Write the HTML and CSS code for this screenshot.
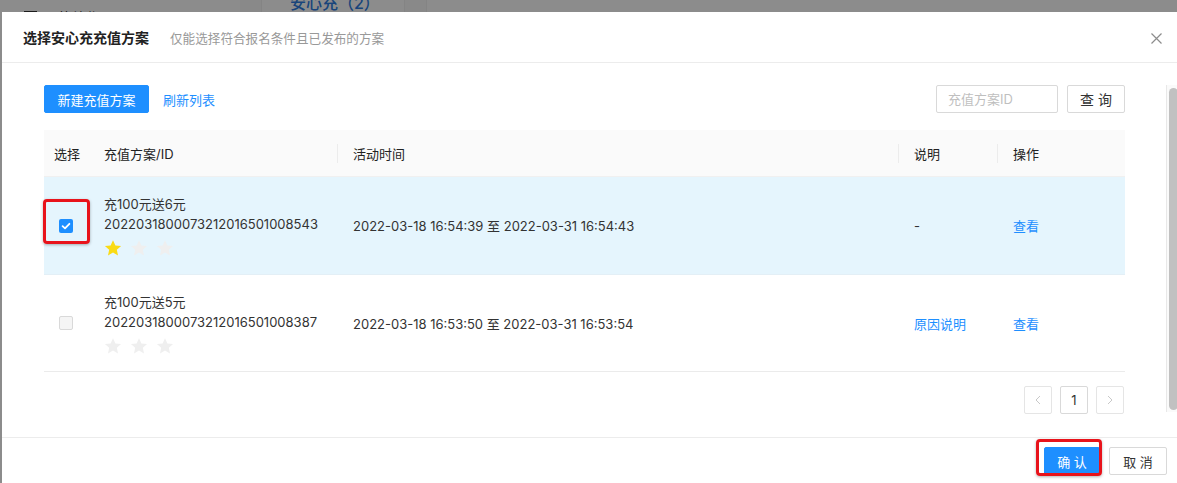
FILE: index.html
```html
<!DOCTYPE html>
<html lang="zh-CN">
<head>
    <meta charset="UTF-8">
    <title>选择安心充充值方案</title>
    <link rel="stylesheet" href="styles.css">
</head>
<body>
    <div class="page">
        <div class="side-nav"><span class="nav-icon"></span>运营总览</div>
        <div class="page-tabs">
            <div class="page-tab"></div>
            <div class="page-tab active">安心充（2）</div>
            <div class="page-tab"></div>
        </div>
    </div>

    <div class="mask"></div>

    <div class="modal">
        <div class="modal-header">
            <div class="modal-title">选择安心充充值方案<span class="modal-sub">仅能选择符合报名条件且已发布的方案</span></div>
            <span class="modal-close">
                <svg width="11" height="11" viewBox="0 0 11 11"><path d="M0.5 0.5 L10.5 10.5 M10.5 0.5 L0.5 10.5" stroke="#8c8c8c" stroke-width="1.2" fill="none"/></svg>
            </span>
        </div>

        <div class="modal-body">
            <div class="toolbar">
                <div class="toolbar-left">
                    <button class="btn btn-primary btn-new">新建充值方案</button>
                    <a class="link">刷新列表</a>
                </div>
                <div class="toolbar-right">
                    <input class="search-input" placeholder="充值方案ID">
                    <button class="btn btn-search">查 询</button>
                </div>
            </div>

            <div class="plan-table">
                <div class="row row-head">
                    <div class="cell cell-check">选择</div>
                    <div class="cell">充值方案/ID</div>
                    <div class="cell sep">活动时间</div>
                    <div class="cell sep">说明</div>
                    <div class="cell sep">操作</div>
                </div>

                <div class="row row-selected">
                    <div class="cell cell-check">
                        <span class="check-wrap">
                            <span class="checkbox checked">
                                <svg width="14" height="14" viewBox="0 0 14 14"><path d="M3.6 7.2 L6 9.4 L10.4 4.8" stroke="#fff" stroke-width="1.8" fill="none" stroke-linecap="round" stroke-linejoin="round"/></svg>
                            </span>
                            <span class="mark mark-check"></span>
                        </span>
                    </div>
                    <div class="cell plan">
                        <div>充100元送6元</div>
                        <div>2022031800073212016501008543</div>
                        <div class="stars">
                            <svg class="star on" viewBox="0 0 24 24"><path d="M12 1.5l3.2 7 7.6.8-5.7 5.1 1.6 7.5L12 18l-6.7 3.9 1.6-7.5-5.7-5.1 7.6-.8z"/></svg>
                            <svg class="star" viewBox="0 0 24 24"><path d="M12 1.5l3.2 7 7.6.8-5.7 5.1 1.6 7.5L12 18l-6.7 3.9 1.6-7.5-5.7-5.1 7.6-.8z"/></svg>
                            <svg class="star" viewBox="0 0 24 24"><path d="M12 1.5l3.2 7 7.6.8-5.7 5.1 1.6 7.5L12 18l-6.7 3.9 1.6-7.5-5.7-5.1 7.6-.8z"/></svg>
                        </div>
                    </div>
                    <div class="cell">2022-03-18 16:54:39 至 2022-03-31 16:54:43</div>
                    <div class="cell">-</div>
                    <div class="cell"><a class="link">查看</a></div>
                </div>

                <div class="row">
                    <div class="cell cell-check"><span class="checkbox disabled"></span></div>
                    <div class="cell plan">
                        <div>充100元送5元</div>
                        <div>2022031800073212016501008387</div>
                        <div class="stars">
                            <svg class="star" viewBox="0 0 24 24"><path d="M12 1.5l3.2 7 7.6.8-5.7 5.1 1.6 7.5L12 18l-6.7 3.9 1.6-7.5-5.7-5.1 7.6-.8z"/></svg>
                            <svg class="star" viewBox="0 0 24 24"><path d="M12 1.5l3.2 7 7.6.8-5.7 5.1 1.6 7.5L12 18l-6.7 3.9 1.6-7.5-5.7-5.1 7.6-.8z"/></svg>
                            <svg class="star" viewBox="0 0 24 24"><path d="M12 1.5l3.2 7 7.6.8-5.7 5.1 1.6 7.5L12 18l-6.7 3.9 1.6-7.5-5.7-5.1 7.6-.8z"/></svg>
                        </div>
                    </div>
                    <div class="cell">2022-03-18 16:53:50 至 2022-03-31 16:53:54</div>
                    <div class="cell"><a class="link">原因说明</a></div>
                    <div class="cell"><a class="link">查看</a></div>
                </div>
            </div>

            <div class="pager">
                <span class="page-item disabled">
                    <svg width="6" height="10" viewBox="0 0 6 10"><path d="M5 1 L1 5 L5 9" stroke="#c8c8c8" fill="none"/></svg>
                </span>
                <span class="page-item">1</span>
                <span class="page-item disabled">
                    <svg width="6" height="10" viewBox="0 0 6 10"><path d="M1 1 L5 5 L1 9" stroke="#c8c8c8" fill="none"/></svg>
                </span>
            </div>

            <div class="scrollbar"><div class="scroll-thumb"></div></div>
        </div>

        <div class="modal-footer">
            <span class="ok-wrap">
                <button class="btn btn-primary btn-ok">确 认</button>
                <span class="mark mark-ok"></span>
            </span>
            <button class="btn btn-cancel">取 消</button>
        </div>
    </div>
</body>
</html>
```

FILE: styles.css
```css
* {
    box-sizing: border-box;
    margin: 0;
    padding: 0;
}

body {
    font-family: Inter, "Noto Sans CJK SC", sans-serif;
    font-size: 13px;
    color: #333;
    background: #fff;
    overflow: hidden;
    height: 483px;
}

/* page behind the mask */
.page {
    display: flex;
    height: 60px;
}

.side-nav {
    width: 240px;
    padding: 7px 0 0 24px;
    font-size: 14px;
    color: #333;
    display: flex;
    gap: 6px;
}

.nav-icon {
    width: 13px;
    height: 13px;
    border: 1.5px solid #333;
    margin-top: 4px;
}

.page-tabs {
    display: flex;
    margin-top: -10px;
}

.page-tab {
    width: 22px;
    height: 40px;
    border-right: 1px solid #f0f0f0;
    background: #fafafa;
}

.page-tab.active {
    width: 143px;
    padding-left: 28px;
    font-size: 16px;
    font-weight: 500;
    line-height: 26px;
    color: #2f7de1;
    background: #fff;
}

.mask {
    position: fixed;
    inset: 0;
    background: rgba(0, 0, 0, 0.45);
}

/* modal */
.modal {
    position: fixed;
    top: 12px;
    left: 2px;
    width: 1190px;
    background: #fff;
}

.modal-header {
    height: 51px;
    padding: 0 30px 0 21px;
    border-bottom: 1px solid #ececec;
    display: flex;
    align-items: center;
    justify-content: space-between;
}

.modal-title {
    font-size: 14px;
    font-weight: 600;
    color: #222;
}

.modal-sub {
    margin-left: 21px;
    font-size: 12.6px;
    font-weight: normal;
    color: #999;
}

.modal-close {
    display: flex;
    margin-top: 2px;
}

.modal-body {
    position: relative;
    padding: 22px 67px 23px 42px;
}

.toolbar {
    display: flex;
    justify-content: space-between;
    align-items: center;
}

.toolbar-left,
.toolbar-right {
    display: flex;
    align-items: center;
}

.btn {
    height: 28px;
    border: 1px solid #d9d9d9;
    border-radius: 2px;
    background: #fff;
    color: #333;
    font-family: inherit;
    font-size: 13px;
    cursor: pointer;
}

.btn-primary {
    background: #1e8fff;
    border-color: #1e8fff;
    color: #fff;
}

.btn-new {
    width: 105px;
}

.link {
    color: #1e8fff;
    cursor: pointer;
}

.toolbar-left .link {
    margin-left: 14px;
}

.search-input {
    width: 122px;
    height: 28px;
    padding: 0 11px;
    border: 1px solid #d9d9d9;
    border-radius: 2px;
    font-family: inherit;
    font-size: 13px;
    outline: none;
}

.search-input::placeholder {
    color: #bfbfbf;
}

.btn-search {
    width: 58px;
    margin-left: 9px;
    font-size: 14px;
}

/* table */
.plan-table {
    margin-top: 17px;
}

.row {
    display: grid;
    grid-template-columns: 44px 249px 561px 99px 1fr;
    height: 98px;
    border-bottom: 1px solid #ebebeb;
}

.row-head {
    height: 47px;
    background: #fafafa;
    border-bottom: 1px solid #f0f0f0;
    color: #222;
}

.row-selected {
    height: 98px;
    background: #e5f5fd;
    border-bottom: 1px solid #e3eff6;
}

.row:last-child {
    height: 97px;
}

.cell {
    position: relative;
    display: flex;
    align-items: center;
    padding-left: 16px;
}

.cell-check {
    padding-left: 10px;
}

.row:not(.row-head) .cell-check {
    padding-left: 0;
    justify-content: center;
}

.sep::before {
    content: "";
    position: absolute;
    left: 0;
    top: 14px;
    height: 19px;
    border-left: 1px solid #ececec;
}

.plan {
    flex-direction: column;
    align-items: flex-start;
    justify-content: center;
    line-height: 20px;
}

.stars {
    display: flex;
    gap: 8px;
    margin-top: 5px;
}

.star {
    width: 18px;
    height: 18px;
    fill: #efefef;
}

.star.on {
    fill: #fadb14;
}

.checkbox {
    display: block;
    width: 14px;
    height: 14px;
    border-radius: 2px;
    border: 1px solid #d9d9d9;
    background: #f5f5f5;
}

.checkbox.checked {
    border: none;
    background: #1e8fff;
}

.checkbox svg {
    display: block;
}

.check-wrap,
.ok-wrap {
    position: relative;
    display: inline-block;
}

/* red annotation boxes */
.mark {
    position: absolute;
    border: 3px solid #e8131b;
    border-radius: 4px;
    box-shadow: 0 1px 3px rgba(0, 0, 0, 0.3);
}

.mark-check {
    left: -16px;
    top: -20px;
    width: 47px;
    height: 45px;
}

.mark-ok {
    left: -8px;
    top: -8px;
    width: 66px;
    height: 37px;
}

/* pager */
.pager {
    display: flex;
    justify-content: flex-end;
    gap: 8px;
    margin-top: 14px;
    padding-right: 1px;
}

.page-item {
    width: 28px;
    height: 28px;
    border: 1px solid #d9d9d9;
    border-radius: 2px;
    display: flex;
    align-items: center;
    justify-content: center;
    color: #333;
}

.page-item.disabled {
    border-color: #e5e5e5;
}

.scrollbar {
    position: absolute;
    left: 1164px;
    top: 22px;
    width: 16px;
    height: 327px;
    background: #fafafa;
    border-left: 1px solid #e8e8e8;
}

.scroll-thumb {
    margin: 3px 0 0 2px;
    width: 9px;
    height: 322px;
    border-radius: 5px;
    background: #c1c1c1;
}

/* footer */
.modal-footer {
    border-top: 1px solid #ececec;
    padding: 9px 25px 10px 0;
    display: flex;
    justify-content: flex-end;
    gap: 9px;
}

.btn-ok {
    width: 56px;
    display: block;
}

.btn-cancel {
    width: 58px;
}
```
